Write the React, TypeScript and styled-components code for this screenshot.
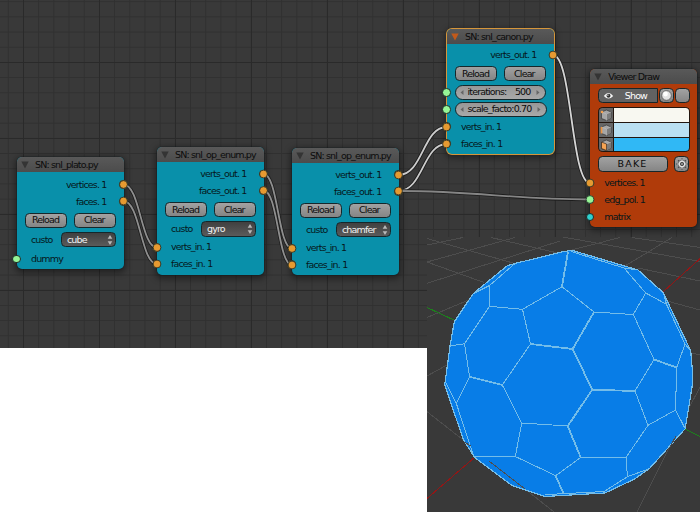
import React from "react";
import styled, { createGlobalStyle, css } from "styled-components";

const GlobalStyle = createGlobalStyle`
  html, body { margin: 0; padding: 0; background: #fff; overflow: hidden; }
  * { box-sizing: border-box; }
`;

const Screen = styled.main`
  position: relative;
  width: 700px;
  height: 513px;
  overflow: hidden;
  background: #fff;
  font-family: "DejaVu Sans", sans-serif;
  font-size: 9.5px;
  letter-spacing: -0.85px;
  line-height: 12px;
  color: #06171b;
`;

const Editor = styled.section`
  height: 348px;
  background-color: #393939;
  background-image:
    linear-gradient(90deg, #2a2a2a 1px, transparent 1px),
    linear-gradient(#2a2a2a 1px, transparent 1px),
    linear-gradient(90deg, #303030 1px, transparent 1px),
    linear-gradient(#303030 1px, transparent 1px);
  background-size: 76px 76px, 76px 76px, 15.2px 15.2px, 15.2px 15.2px;
  background-position: 23px 0, 0 62px, 7.8px 0, 0 1.2px;
`;

const Viewport = styled.section`
  position: absolute;
  left: 427px;
  top: 237px;
  width: 273px;
  height: 275px;
  background: #393939;
  svg { display: block; }
`;

const Wires = styled.svg`
  position: absolute;
  left: 0;
  top: 0;
`;

const NodeBox = styled.article<{ $x: number; $y: number; $h: number; $tone: string; $active?: boolean }>`
  position: absolute;
  left: ${p => p.$x}px;
  top: ${p => p.$y}px;
  width: 107px;
  height: ${p => p.$h}px;
  border-radius: 5px;
  background: ${p => p.$tone};
  box-shadow: 0 0 0 ${p => (p.$active ? "1px #d5963b" : "0.6px rgba(20,30,32,.55)")}, 0 2px 6px 2px rgba(0, 0, 0, 0.4);
`;

const Header = styled.header`
  display: flex;
  align-items: center;
  height: 15px;
  padding: 1px 0 0 4.5px;
  gap: 6px;
  border-radius: 5px 5px 0 0;
  background: linear-gradient(#595959, #4c4c4c);
  color: #0c0c0c;
  white-space: nowrap;
  svg { flex: none; }
`;

const Row = styled.div<{ $gap?: number; $h?: number; $out?: boolean }>`
  position: relative;
  display: flex;
  align-items: center;
  justify-content: ${p => (p.$out ? "flex-end" : "flex-start")};
  height: ${p => p.$h ?? 17}px;
  margin-top: ${p => p.$gap ?? 0}px;
  padding: 0 ${p => (p.$out ? 17 : 0)}px 0 14.5px;
  white-space: nowrap;
`;

const Socket = styled.i<{ $color: string; $out?: boolean }>`
  position: absolute;
  top: calc(50% - 4.3px);
  ${p => (p.$out ? css`right: -4.3px;` : css`left: -4.3px;`)}
  width: 8.6px;
  height: 8.6px;
  border-radius: 50%;
  border: 0.8px solid #1d2a26;
  background: ${p => p.$color};
`;

const Controls = styled.div<{ $gap: number }>`
  display: flex;
  height: 15.4px;
  margin: ${p => p.$gap}px 7.5px 0 8.5px;
  gap: 6.5px;
`;

const surface = css`
  display: flex;
  align-items: center;
  justify-content: center;
  border: 1px solid #15272b;
  border-radius: 4.5px;
  background: linear-gradient(#a2a2a2, #858585);
  color: #0b0b0b;
`;

const Button = styled.button<{ $bake?: boolean }>`
  ${surface}
  flex: 1;
  padding: 0 1px 0 0;
  font: inherit;
  letter-spacing: ${p => (p.$bake ? "1.2px" : "-0.85px")};
`;

const Square = styled(Button)`
  flex: 0 0 15px;
  padding: 0;
`;

const NumberField = styled.div`
  ${surface}
  flex: 1;
  justify-content: space-between;
  border-radius: 8px;
  padding: 0 5px 0 4px;
  background: linear-gradient(#979797, #a9a9a9);
  svg { flex: none; }
`;

const Label = styled.span`
  flex: 1;
  padding-left: 3.5px;
`;

const Value = styled.span`
  padding-right: 5.5px;
`;

const Select = styled.div`
  ${surface}
  flex: 0 0 55px;
  height: 15.4px;
  justify-content: space-between;
  padding: 0 2px 0 5px;
  margin-left: auto;
  background: linear-gradient(#404040, #5b5b5b);
  color: #f2f2f2;
`;

const SelectRow = styled(Row)`
  padding-right: 7.5px;
  height: 15.4px;
`;

const ShowRow = styled(Controls)`
  gap: 1px;
  margin-right: 6.5px;
`;

const ShowToggle = styled.div`
  ${surface}
  flex: 1;
  justify-content: flex-start;
  gap: 11px;
  padding-left: 3.5px;
  border-radius: 4.5px 0 0 4.5px;
  background: #626262;
  color: #fff;
`;

const Swatches = styled.div`
  display: grid;
  grid-template-rows: repeat(3, 1fr);
  gap: 1px;
  height: 45px;
  margin: 4px 6.5px 0 8.5px;
  border: 1px solid #22160f;
  border-radius: 4.5px;
  overflow: hidden;
  background: #22160f;
`;

const SwatchRow = styled.div<{ $color: string }>`
  display: grid;
  grid-template-columns: 14px 1fr;
  gap: 1px;
  background: linear-gradient(90deg, #666 14px, #22160f 14px, #22160f 15px, ${p => p.$color} 15px);
  svg { margin: 1px; }
`;

const NumSlot = styled.div`
  display: flex;
  flex: 1;
  height: 15.4px;
  margin: 0 7.5px 0 -6px;
`;

const ORANGE = "#e69a31";
const GREEN = "#96f596";
const TEAL = "#0990aa";

const Title = ({ children, arrow = "#343434" }: { children: string; arrow?: string }) => (
  <Header>
    <svg width="8" height="8" viewBox="0 0 8 8"><path d="M.3 .6h7.4L4 7.6z" fill={arrow} /></svg>
    <span>{children}</span>
  </Header>
);

const Port = ({ label, color = ORANGE, out, gap, h }: { label: string; color?: string; out?: boolean; gap?: number; h?: number }) => (
  <Row $out={out} $gap={gap} $h={h}>{label}<Socket $color={color} $out={out} /></Row>
);

const Actions = ({ gap }: { gap: number }) => (
  <Controls $gap={gap}><Button>Reload</Button><Button>Clear</Button></Controls>
);

const Choice = ({ value }: { value: string }) => (
  <SelectRow $gap={3.9}>
    custo
    <Select>
      <span>{value}</span>
      <svg width="6" height="12" viewBox="0 0 6 12" fill="#b9b9b9"><path d="M.7 4.8 3 1l2.3 3.8zM.7 7.2h4.6L3 11z" /></svg>
    </Select>
  </SelectRow>
);

const Num = ({ label, value, gap }: { label: string; value: string; gap: number }) => (
  <Row $h={15.4} $gap={gap}>
    <Socket $color={GREEN} />
    <NumSlot>
      <NumberField>
        <svg width="4" height="5"><path d="M3.5 0v5L.5 2.5z" fill="#666" /></svg>
        <Label>{label}</Label>
        <Value>{value}</Value>
        <svg width="4" height="5"><path d="M.5 0v5l3-2.5z" fill="#666" /></svg>
      </NumberField>
    </NumSlot>
  </Row>
);

const Cube = ({ part }: { part: "vertex" | "edge" | "face" }) => (
  <svg width="12" height="12" viewBox="0 0 12 12" strokeWidth=".7">
    <path d="M1.5 3 6.5 1 11 3v6l-4.5 2.5-5-2z" fill="#a6a6a6" stroke="#383838" />
    <path d="M6.5 5 11 3v6l-4.5 2.5z" fill="#7b7b7b" />
    <path d="M1.5 3 6.5 5 11 3M6.5 5v6.5" fill="none" stroke="#c4c4c4" strokeWidth=".5" />
    {part === "vertex" && <circle cx="2" cy="3" r="1.3" fill="#f4a14e" />}
    {part === "edge" && <path d="M1.5 3v6.5" stroke="#ee9540" strokeWidth="1.6" />}
    {part === "face" && <path d="M1.5 3 6.5 5v6.5l-5-2z" fill="#f5a353" stroke="#38271a" />}
  </svg>
);

const wires = [
  { d: "M123.5 184.5C140 184.5 141 247.5 157 247.5", c: "#8f8f8f" },
  { d: "M123.5 201C140 201 141 264 157 264", c: "#8f8f8f" },
  { d: "M263.5 174C278 174 278 248.5 292 248.5", c: "#8f8f8f" },
  { d: "M263.5 190.5C278 190.5 278 265 292 265", c: "#8f8f8f" },
  { d: "M398.5 175C423 175 423 127 446.5 127", c: "#ccc" },
  { d: "M398.5 191C423 191 423 144 446.5 144", c: "#ccc" },
  { d: "M398.5 191C480 191 510 199.5 590 199.5", c: "#858585" },
  { d: "M553 55C572 55 571 183 590 183", c: "#d4d4d4" },
];

const outline =
  "446.5,372 450,346 454.3,321.7 473.3,293.5 507.5,265.5 515,263.5 560,252.3 572,250.3 638,270 663.3,292.7 690.7,350.7 692.5,372 692.5,384 685.2,428.7 649.3,468.7 634,479.3 605,493 545,496.5 511.7,485.3 474.5,457.3 463.3,439.3 444.7,385";

const thinEdges =
  "M515 263.5 489.5 285.5 473.5 293.5M489.5 285.5V306.3L522.5 309.3 562 286.7 594 312 633.3 314.5 645.7 293 624 268 571 251.5M624 268 638 270M645.7 293 666.5 304.3 663.3 292.7M666.5 304.3 685 344 690.7 350.7M685 344 676.7 367.5M654 359.5 633.3 314.5M654 359.5 635 391 648 425.3 626 457.5H580.7L555.7 475.7 515.3 456.5H475M676.7 367.5 675.5 410 685.2 428.7M675.5 410 648 425.3M626 457.5 627.5 476.7 649.3 468.7M627.5 476.7 604 491.5 563.5 493.7 545 494.6M522.5 309.3 530.5 344 502.3 385 521.7 423 567.7 426M521.7 423 515.3 456.5M489.5 306.3 464.5 343.7 450.3 346M464.5 343.7 469.5 376.7 456.3 403.3 446 383M456.3 403.3 473.5 456";

const thickEdges =
  "M568 251.5 562 286.7M594 312 572.7 349 530.5 344M572.7 349 592.3 389.7 635 391M592.3 389.7 567.7 426 580.7 457.3M654 359.5 676.7 367.5M469.5 376.7 502.3 385M555.7 475.7 563.5 493.7";

const floorLines =
  "M427 245 463 237.5M427 238.5 520 265M427 262 515 237.5M427 283.3 560 241M427 262 484 282.5M427 317.5 471 299M491 237.5 575 257M427 376 447 365M560 236.5 700 261.5M632 237.5 700 247.5M560 253 620 237.5M625 266 672 237.5M638 268 700 281M667 301 700 310M690 352.5 700 355M427 411.7 471 446M525 489 554 512M675 436 637 512M700 387 688 410";

const orangeJoints = [
  [123.5, 184.5], [123.5, 201], [157, 247.5], [157, 264],
  [263.5, 174], [263.5, 190.5], [292, 248.5], [292, 265],
  [398.5, 175], [398.5, 191], [446.5, 127], [446.5, 144],
  [553, 55], [590, 183],
];

export default function App() {
  return (
    <>
      <GlobalStyle />
      <Screen>
        <Editor />
        <Viewport>
          <svg width="273" height="275" viewBox="427 237 273 275" shapeRendering="crispEdges" fill="none">
            <path d={floorLines} stroke="#4d4d4d" />
            <path d="M427 307.5 455 320.5M685 429 700 436.5" stroke="#1c811c" />
            <path d="M700 258.7 663 292M427 498.5 475 457" stroke="#951515" />
            <polygon points={outline} fill="#087de7" stroke="#74bde9" strokeWidth="1.2" />
            <path d={thinEdges} stroke="#74bde9" strokeWidth="1" />
            <path d={thickEdges} stroke="#74bde9" strokeWidth="1.8" />
            <path d="M489 461 525 489M464 442 471 446M670 447 676 436" stroke="#4d4d4d" />
          </svg>
        </Viewport>

        <NodeBox $x={16.5} $y={157} $h={112} $tone={TEAL}>
          <Title>SN: snl_plato.py</Title>
          <Port label="vertices. 1" out gap={4} />
          <Port label="faces. 1" out />
          <Actions gap={2.6} />
          <Choice value="cube" />
          <Port label="dummy" color={GREEN} gap={3.2} />
        </NodeBox>

        <NodeBox $x={156.5} $y={147} $h={127.5} $tone={TEAL}>
          <Title>SN: snl_op_enum.py</Title>
          <Port label="verts_out. 1" out gap={3.5} />
          <Port label="faces_out. 1" out />
          <Actions gap={2.6} />
          <Choice value="gyro" />
          <Port label="verts_in. 1" gap={2.2} />
          <Port label="faces_in. 1" h={16} />
        </NodeBox>

        <NodeBox $x={291.5} $y={147.5} $h={127.5} $tone={TEAL}>
          <Title>SN: snl_op_enum.py</Title>
          <Port label="verts_out. 1" out gap={3.5} />
          <Port label="faces_out. 1" out />
          <Actions gap={2.8} />
          <Choice value="chamfer" />
          <Port label="verts_in. 1" gap={2.2} />
          <Port label="faces_in. 1" h={16} />
        </NodeBox>

        <NodeBox $x={446.5} $y={28.5} $h={125.5} $tone={TEAL} $active>
          <Title arrow="#c25a1b">SN: snl_canon.py</Title>
          <Port label="verts_out. 1" out gap={3} />
          <Actions gap={2.5} />
          <Num label="iterations:" value="500" gap={3.4} />
          <Num label="scale_facto:" value="0.70" gap={1.6} />
          <Port label="verts_in. 1" gap={1} />
          <Port label="faces_in. 1" />
        </NodeBox>

        <NodeBox $x={589.8} $y={68.5} $h={158.5} $tone="#b03b0a">
          <Title>Viewer Draw</Title>
          <ShowRow $gap={4.5}>
            <ShowToggle>
              <svg width="11" height="8" viewBox="0 0 11 8">
                <path d="M.8 4Q5.5-1.8 10.2 4 5.5 9 .8 4z" fill="#f6f6f6" />
                <circle cx="5.5" cy="3.7" r="2" fill="#333" />
                <circle cx="4.9" cy="3.1" r=".7" fill="#fff" />
              </svg>
              <span>Show</span>
            </ShowToggle>
            <Square>
              <svg width="11" height="11" viewBox="0 0 11 11">
                <circle cx="5.5" cy="5.5" r="4.8" fill="#e3e3e3" stroke="#555" strokeWidth=".8" />
                <circle cx="4.5" cy="4" r="2.4" fill="#fff" />
              </svg>
            </Square>
            <Square aria-label="Toggle" />
          </ShowRow>
          <Swatches>
            <SwatchRow $color="#f8f8f1"><Cube part="vertex" /></SwatchRow>
            <SwatchRow $color="#bae0f2"><Cube part="edge" /></SwatchRow>
            <SwatchRow $color="#30b8f5"><Cube part="face" /></SwatchRow>
          </Swatches>
          <Controls $gap={3.8}>
            <Button $bake>BAKE</Button>
            <Square>
              <svg width="12" height="12" viewBox="0 0 12 12" fill="none">
                <path d="M6 .4v11.2M.4 6h11.2M2.2 2.2l7.6 7.6M9.8 2.2 2.2 9.8" stroke="#4a4a4a" strokeWidth="1.6" />
                <circle cx="6" cy="6" r="3.9" fill="#e6e6e6" stroke="#4a4a4a" strokeWidth=".7" />
                <path d="M6 1v10M1 6h10" stroke="#e6e6e6" strokeWidth=".8" />
                <circle cx="6" cy="6" r="1.7" fill="#8a8a8a" stroke="#333" strokeWidth=".8" />
              </svg>
            </Square>
          </Controls>
          <Port label="vertices. 1" gap={3} />
          <Port label="edg_pol. 1" color={GREEN} />
          <Port label="matrix" color="#2fd0cf" />
        </NodeBox>

        <Wires width="700" height="348" fill="none">
          {wires.map(w => (
            <g key={w.d}>
              <path d={w.d} stroke="#1c1c1c" strokeWidth="3.4" />
              <path d={w.d} stroke={w.c} strokeWidth="1.8" />
            </g>
          ))}
          <g stroke="#1d2a26" strokeWidth=".8" fill={ORANGE}>
            {orangeJoints.map(([x, y]) => (
              <circle key={`${x}-${y}`} cx={x} cy={y} r="3.9" />
            ))}
            <circle cx="590" cy="199.5" r="3.9" fill={GREEN} />
          </g>
        </Wires>
      </Screen>
    </>
  );
}
